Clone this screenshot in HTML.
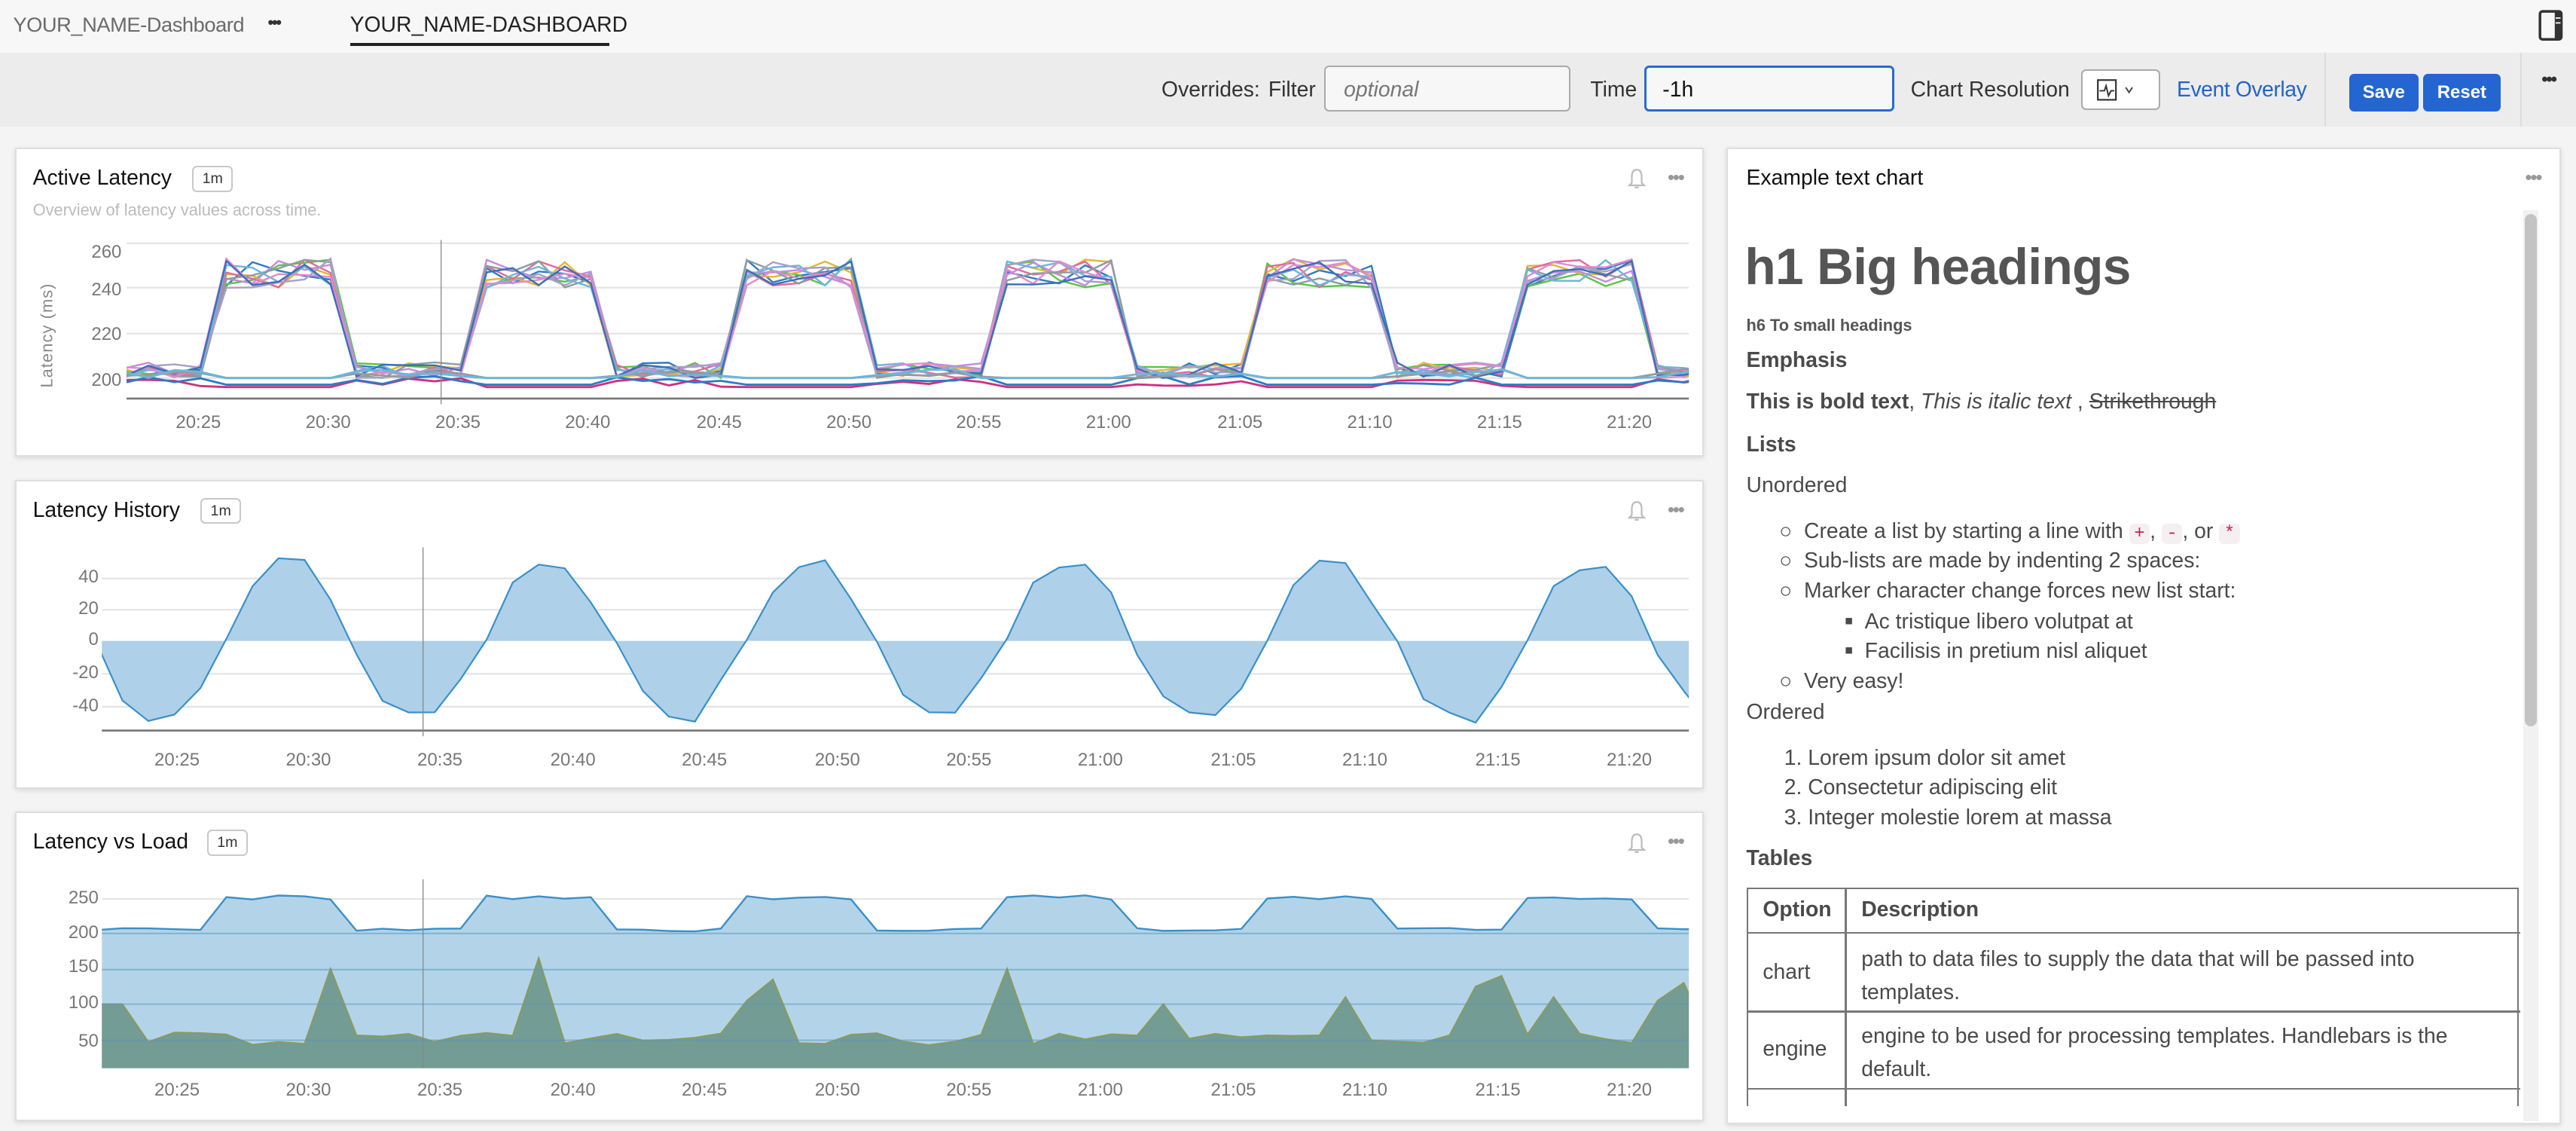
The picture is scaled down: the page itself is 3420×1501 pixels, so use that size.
<!DOCTYPE html>
<html><head><meta charset="utf-8">
<style>
html,body{margin:0;padding:0;width:3420px;height:1500px;overflow:hidden;background:#f4f4f4;}
#root{position:absolute;left:0;top:0;width:1568px;height:688px;zoom:2.18112;font-family:"Liberation Sans",sans-serif;color:#333;}
.a{position:absolute;white-space:nowrap;}
.panel{position:absolute;background:#fff;border:1px solid #dedede;box-shadow:0 1px 3px rgba(0,0,0,.12);box-sizing:border-box;}
.badge{position:absolute;border:1px solid #c8c8c8;border-radius:3px;font-size:9px;line-height:14px;text-align:center;color:#333;background:#fff;}
.ttl{font-size:13px;color:#111;}
.lab{font-size:11px;color:#777;}
.yl{font-size:11px;color:#777;text-align:right;width:30px;}
.rt{font-size:13px;color:#4a4a4a;}
.code{background:#f6eff1;color:#c0264f;border-radius:3px;padding:0 3px;font-family:"Liberation Mono",monospace;font-size:11px;}
.dots{font-size:12px;color:#999;letter-spacing:-1px;}
</style></head><body>
<div id="root">
<!-- top bar -->
<div class="a" style="left:0;top:0;width:1568px;height:32px;background:#f7f7f7;"></div>
<div class="a" style="left:8px;top:8px;font-size:12.5px;color:#6a6a6a;letter-spacing:-.2px;">YOUR_NAME-Dashboard</div>
<div class="a" style="left:163px;top:8px;font-size:10px;color:#333;font-weight:bold;letter-spacing:-1px;">•••</div>
<div class="a" style="left:213px;top:8px;font-size:13px;color:#222;">YOUR_NAME-DASHBOARD</div>
<div class="a" style="left:213px;top:26px;width:158px;height:2px;background:#222;"></div>
<svg class="a" style="left:1545px;top:6px" width="16" height="20" viewBox="0 0 16 20"><rect x="1" y="1" width="13" height="17" rx="1.5" fill="none" stroke="#333" stroke-width="1.6"/><rect x="10" y="1" width="4" height="17" fill="#333"/><line x1="10.5" y1="5" x2="13.5" y2="5" stroke="#fff" stroke-width=".8"/><line x1="10.5" y1="8" x2="13.5" y2="8" stroke="#fff" stroke-width=".8"/></svg>
<!-- toolbar -->
<div class="a" style="left:0;top:32px;width:1568px;height:45px;background:#ececec;"></div>
<div class="a" style="left:707px;top:47px;font-size:13px;color:#333;">Overrides:</div>
<div class="a" style="left:772px;top:47px;font-size:13px;color:#333;">Filter</div>
<div class="a" style="left:806px;top:40px;width:150px;height:28px;border:1px solid #aaa;border-radius:3px;background:#f7f7f7;box-sizing:border-box;"></div>
<div class="a" style="left:818px;top:47px;font-size:13px;color:#777;font-style:italic;">optional</div>
<div class="a" style="left:968px;top:47px;font-size:13px;color:#333;">Time</div>
<div class="a" style="left:1001px;top:40px;width:152px;height:28px;border:1.5px solid #2a6ad0;border-radius:3px;background:#f7f7f7;box-sizing:border-box;"></div>
<div class="a" style="left:1012px;top:47px;font-size:13px;color:#111;">-1h</div>
<div class="a" style="left:1163px;top:47px;font-size:13px;color:#333;">Chart Resolution</div>
<div class="a" style="left:1267px;top:42px;width:48px;height:25px;border:1px solid #aaa;border-radius:3px;background:#fff;box-sizing:border-box;"></div>
<svg class="a" style="left:1276px;top:47px" width="32" height="16" viewBox="0 0 32 16"><rect x="1" y="1.5" width="11" height="12" fill="none" stroke="#333" stroke-width="1"/><polyline points="2,8 5,8 6,5 7.5,11 9,8 11,8" fill="none" stroke="#333" stroke-width=".9"/><polyline points="18,6 20,9 22,6" fill="none" stroke="#444" stroke-width=".9"/></svg>
<div class="a" style="left:1325px;top:47px;font-size:13px;color:#2563c9;letter-spacing:-.2px;">Event Overlay</div>
<div class="a" style="left:1415px;top:32px;width:1px;height:45px;background:#ddd;"></div>
<div class="a" style="left:1430px;top:45px;width:42px;height:23px;background:#2466d1;border-radius:3px;color:#fff;font-size:11px;line-height:23px;text-align:center;font-weight:bold;">Save</div>
<div class="a" style="left:1475px;top:45px;width:47px;height:23px;background:#2466d1;border-radius:3px;color:#fff;font-size:11px;line-height:23px;text-align:center;font-weight:bold;">Reset</div>
<div class="a" style="left:1534px;top:32px;width:1px;height:45px;background:#ddd;"></div>
<div class="a" style="left:1547px;top:42px;font-size:11px;color:#333;letter-spacing:-1px;font-weight:bold;">•••</div>

<!-- panels -->
<div class="panel" style="left:9px;top:90px;width:1028px;height:188px;"></div>
<div class="panel" style="left:9px;top:292px;width:1028px;height:188px;"></div>
<div class="panel" style="left:9px;top:494px;width:1028px;height:188px;"></div>
<div class="panel" style="left:1051px;top:90px;width:508px;height:594px;"></div>

<!-- panel 1 -->
<div class="a ttl" style="left:20px;top:101px;">Active Latency</div>
<div class="badge" style="left:117px;top:101px;width:23px;">1m</div>
<div class="a" style="left:20px;top:122px;font-size:10px;color:#bbb;">Overview of latency values across time.</div>
<div class="a yl" style="left:44px;top:147px;">260</div>
<div class="a yl" style="left:44px;top:170px;">240</div>
<div class="a yl" style="left:44px;top:197px;">220</div>
<div class="a yl" style="left:44px;top:225px;">200</div>
<div class="a" style="left:-3px;top:198px;font-size:10px;color:#888;transform:rotate(-90deg);letter-spacing:.5px;">Latency (ms)</div>
<!-- panel 2 -->
<div class="a ttl" style="left:20px;top:303px;">Latency History</div>
<div class="badge" style="left:122px;top:303px;width:23px;">1m</div>
<div class="a yl" style="left:30px;top:345px;">40</div>
<div class="a yl" style="left:30px;top:364px;">20</div>
<div class="a yl" style="left:30px;top:383px;">0</div>
<div class="a yl" style="left:30px;top:403px;">-20</div>
<div class="a yl" style="left:30px;top:423px;">-40</div>
<!-- panel 3 -->
<div class="a ttl" style="left:20px;top:505px;">Latency vs Load</div>
<div class="badge" style="left:126px;top:505px;width:23px;">1m</div>
<div class="a yl" style="left:30px;top:540px;">250</div>
<div class="a yl" style="left:30px;top:561px;">200</div>
<div class="a yl" style="left:30px;top:582px;">150</div>
<div class="a yl" style="left:30px;top:604px;">100</div>
<div class="a yl" style="left:30px;top:627px;">50</div>

<!-- bells & dots -->
<svg class="a" style="left:991px;top:102px" width="11" height="14" viewBox="0 0 11 14"><path d="M5.5 1.5 C3 1.5 2.5 4 2.5 6 L2.5 9.5 L1 11 L10 11 L8.5 9.5 L8.5 6 C8.5 4 8 1.5 5.5 1.5Z" fill="none" stroke="#bbb" stroke-width="1"/><path d="M4.3 12.3 h2.4" stroke="#bbb"/></svg>
<div class="a dots" style="left:1015px;top:101px;">•••</div>
<svg class="a" style="left:991px;top:304px" width="11" height="14" viewBox="0 0 11 14"><path d="M5.5 1.5 C3 1.5 2.5 4 2.5 6 L2.5 9.5 L1 11 L10 11 L8.5 9.5 L8.5 6 C8.5 4 8 1.5 5.5 1.5Z" fill="none" stroke="#bbb" stroke-width="1"/><path d="M4.3 12.3 h2.4" stroke="#bbb"/></svg>
<div class="a dots" style="left:1015px;top:303px;">•••</div>
<svg class="a" style="left:991px;top:506px" width="11" height="14" viewBox="0 0 11 14"><path d="M5.5 1.5 C3 1.5 2.5 4 2.5 6 L2.5 9.5 L1 11 L10 11 L8.5 9.5 L8.5 6 C8.5 4 8 1.5 5.5 1.5Z" fill="none" stroke="#bbb" stroke-width="1"/><path d="M4.3 12.3 h2.4" stroke="#bbb"/></svg>
<div class="a dots" style="left:1015px;top:505px;">•••</div>

<!-- x labels -->
<div class="a lab" style="left:107px;top:251px">20:25</div><div class="a lab" style="left:186px;top:251px">20:30</div><div class="a lab" style="left:265px;top:251px">20:35</div><div class="a lab" style="left:344px;top:251px">20:40</div><div class="a lab" style="left:424px;top:251px">20:45</div><div class="a lab" style="left:503px;top:251px">20:50</div><div class="a lab" style="left:582px;top:251px">20:55</div><div class="a lab" style="left:661px;top:251px">21:00</div><div class="a lab" style="left:741px;top:251px">21:05</div><div class="a lab" style="left:820px;top:251px">21:10</div><div class="a lab" style="left:899px;top:251px">21:15</div><div class="a lab" style="left:978px;top:251px">21:20</div>
<div class="a lab" style="left:94px;top:456px">20:25</div><div class="a lab" style="left:174px;top:456px">20:30</div><div class="a lab" style="left:254px;top:456px">20:35</div><div class="a lab" style="left:335px;top:456px">20:40</div><div class="a lab" style="left:415px;top:456px">20:45</div><div class="a lab" style="left:496px;top:456px">20:50</div><div class="a lab" style="left:576px;top:456px">20:55</div><div class="a lab" style="left:656px;top:456px">21:00</div><div class="a lab" style="left:737px;top:456px">21:05</div><div class="a lab" style="left:817px;top:456px">21:10</div><div class="a lab" style="left:898px;top:456px">21:15</div><div class="a lab" style="left:978px;top:456px">21:20</div>
<div class="a lab" style="left:94px;top:657px">20:25</div><div class="a lab" style="left:174px;top:657px">20:30</div><div class="a lab" style="left:254px;top:657px">20:35</div><div class="a lab" style="left:335px;top:657px">20:40</div><div class="a lab" style="left:415px;top:657px">20:45</div><div class="a lab" style="left:496px;top:657px">20:50</div><div class="a lab" style="left:576px;top:657px">20:55</div><div class="a lab" style="left:656px;top:657px">21:00</div><div class="a lab" style="left:737px;top:657px">21:05</div><div class="a lab" style="left:817px;top:657px">21:10</div><div class="a lab" style="left:898px;top:657px">21:15</div><div class="a lab" style="left:978px;top:657px">21:20</div>

<svg id="ch" class="a" style="left:0;top:0" width="1568" height="688" viewBox="0 0 1568 688">
<defs>
<clipPath id="c1"><rect x="77" y="130" width="951" height="120"/></clipPath>
<clipPath id="c2"><rect x="62" y="330" width="966" height="120"/></clipPath>
<clipPath id="c3"><rect x="62" y="530" width="966" height="120"/></clipPath>
</defs>
<g stroke="#e4e4e4" stroke-width="1">
<line x1="77" y1="148" x2="1028" y2="148"/><line x1="77" y1="175" x2="1028" y2="175"/><line x1="77" y1="203" x2="1028" y2="203"/><line x1="77" y1="230" x2="1028" y2="230"/>
<line x1="62" y1="352" x2="1028" y2="352"/><line x1="62" y1="371" x2="1028" y2="371"/><line x1="62" y1="410" x2="1028" y2="410"/><line x1="62" y1="430" x2="1028" y2="430"/>
<line x1="62" y1="547" x2="1028" y2="547"/>
</g>
<g id="g1" clip-path="url(#c1)"></g>
<g id="g2" clip-path="url(#c2)"></g>
<g id="g3" clip-path="url(#c3)"></g>
<g stroke="rgba(90,150,190,.5)" stroke-width="1">
<line x1="62" y1="568" x2="1028" y2="568"/><line x1="62" y1="590" x2="1028" y2="590"/><line x1="62" y1="611" x2="1028" y2="611"/><line x1="62" y1="633" x2="1028" y2="633"/>
</g>
<line x1="77" y1="242.5" x2="1028" y2="242.5" stroke="#777" stroke-width="1.2"/>
<line x1="62" y1="444.5" x2="1028" y2="444.5" stroke="#777" stroke-width="1.2"/>
<line x1="268.5" y1="146" x2="268.5" y2="246" stroke="#888" stroke-width=".6"/>
<line x1="257.5" y1="333" x2="257.5" y2="448" stroke="#888" stroke-width=".6"/>
<line x1="257.5" y1="535" x2="257.5" y2="650" stroke="#888" stroke-width=".6"/>
</svg>

<!-- right panel -->
<div class="a ttl" style="left:1063px;top:101px;">Example text chart</div>
<div class="a dots" style="left:1537px;top:101px;">•••</div>
<div class="a" style="left:1536px;top:128px;width:9px;height:554px;background:#f1f1f1;"></div>
<div class="a" style="left:1537px;top:130px;width:7px;height:312px;background:#c3c3c3;border-radius:4px;"></div>
<div class="a" style="left:1062px;top:145px;font-size:31px;font-weight:bold;color:#555;letter-spacing:-.3px;">h1 Big headings</div>
<div class="a" style="left:1063px;top:192px;font-size:10px;font-weight:bold;color:#555;">h6 To small headings</div>
<div class="a rt" style="left:1063px;top:212px;font-weight:bold;">Emphasis</div>
<div class="a rt" style="left:1063px;top:237px;"><b>This is bold text</b>, <i>This is italic text</i> , <s>Strikethrough</s></div>
<div class="a rt" style="left:1063px;top:263px;font-weight:bold;">Lists</div>
<div class="a rt" style="left:1063px;top:288px;">Unordered</div>
<div class="a rt" style="left:1083px;top:316px;">○&nbsp; Create a list by starting a line with <span class="code">+</span>, <span class="code">-</span>, or <span class="code">*</span></div>
<div class="a rt" style="left:1083px;top:334px;">○&nbsp; Sub-lists are made by indenting 2 spaces:</div>
<div class="a rt" style="left:1083px;top:352px;">○&nbsp; Marker character change forces new list start:</div>
<div class="a rt" style="left:1123px;top:371px;"><span style="font-size:8px;vertical-align:2px">■</span>&nbsp;&nbsp;Ac tristique libero volutpat at</div>
<div class="a rt" style="left:1123px;top:389px;"><span style="font-size:8px;vertical-align:2px">■</span>&nbsp;&nbsp;Facilisis in pretium nisl aliquet</div>
<div class="a rt" style="left:1083px;top:407px;">○&nbsp; Very easy!</div>
<div class="a rt" style="left:1063px;top:426px;">Ordered</div>
<div class="a rt" style="left:1086px;top:454px;">1. Lorem ipsum dolor sit amet</div>
<div class="a rt" style="left:1086px;top:472px;">2. Consectetur adipiscing elit</div>
<div class="a rt" style="left:1086px;top:490px;">3. Integer molestie lorem at massa</div>
<div class="a rt" style="left:1063px;top:515px;font-weight:bold;">Tables</div>
<div class="a" style="left:1063px;top:540px;width:471px;height:133px;overflow:hidden;">
<div class="a" style="left:0;top:0;width:470px;height:140px;border:1px solid #777;border-bottom:none;box-sizing:border-box;"></div>
<div class="a" style="left:60px;top:0;width:1px;height:140px;background:#777;"></div>
<div class="a" style="left:0;top:27px;width:471px;height:1px;background:#777;"></div>
<div class="a" style="left:0;top:75px;width:471px;height:1px;background:#777;"></div>
<div class="a" style="left:0;top:122px;width:471px;height:1px;background:#777;"></div>
<div class="a rt" style="left:10px;top:6px;font-weight:bold;">Option</div>
<div class="a rt" style="left:70px;top:6px;font-weight:bold;">Description</div>
<div class="a rt" style="left:10px;top:44px;">chart</div>
<div class="a rt" style="left:70px;top:34px;line-height:20px;">path to data files to supply the data that will be passed into<br>templates.</div>
<div class="a rt" style="left:10px;top:91px;">engine</div>
<div class="a rt" style="left:70px;top:81px;line-height:20px;">engine to be used for processing templates. Handlebars is the<br>default.</div>
</div>
</div>
<script>
(function(){
var s=7;function r(){s=(s*9301+49297)%233280;return s/233280;}
var NS="http://www.w3.org/2000/svg";
function X(t){return 122+15.84*t;}
function hi(t){var m=((t-1)%10+10)%10;return m<=4;}
function el(g,tag,at){var e=document.createElementNS(NS,tag);for(var k in at)e.setAttribute(k,at[k]);document.getElementById(g).appendChild(e);}
var cols=["#2e7bc4","#5ac34a","#e6b533","#e06a9a","#c38be0","#8c9d9d","#6bb6dc","#a8a0c8","#e08ad0","#3d6fb8"];
function Y1(v){return 230-(v-200)*1.37;}
for(var i=0;i<cols.length;i++){var p=[];for(var t=-5;t<=59;t++){var v=hi(t)?240+r()*13:200+r()*7;p.push(X(t).toFixed(1)+","+Y1(v).toFixed(1));}
el("g1","polyline",{points:p.join(" "),fill:"none",stroke:cols[i],"stroke-width":1.1});}
var lows=[["#d0307f",196],["#2e7bc4",197],["#999",200],["#6bb6dc",200]];
for(var j=0;j<lows.length;j++){var p=[];for(var t=-5;t<=59;t++){var v=lows[j][1]+(hi(t)?0:(r()*4));p.push(X(t).toFixed(1)+","+Y1(v).toFixed(1));}
el("g1","polyline",{points:p.join(" "),fill:"none",stroke:lows[j][0],"stroke-width":1.3});}
function Y2(v){return 390-v*0.975;}
var p=[X(-5)+",390"];for(var t=-5;t<=59;t++){var v=45*Math.sin(2*Math.PI*(t-0.85)/10);v=Math.max(-48,Math.min(48,v*1.15))+(r()-.5)*8;if(Math.abs(v)<8)v=v*0.2;p.push(X(t).toFixed(1)+","+Y2(v).toFixed(1));}
var line=p.slice(1).join(" ");
el("g2","polygon",{points:p.join(" ")+" "+X(59)+",390",fill:"#aed0e8"});
el("g2","polyline",{points:line,fill:"none",stroke:"#3a8fc8","stroke-width":1});
function Y3(v){return 568-(v-200)*0.43;}
var up=[],lo=[];var spikes={"5":150,"13":165,"21":105,"22":135,"31":150,"37":100,"44":110,"49":125,"50":140,"52":110,"56":105,"57":130};
for(var t=-5;t<=59;t++){var v=hi(t)?248+r()*6:203+r()*5;up.push(X(t).toFixed(1)+","+Y3(v).toFixed(1));
var w=spikes[""+t]||(42+r()*18);if(t==-4||t==-3)w=100;lo.push(X(t).toFixed(1)+","+Y3(w).toFixed(1));}
el("g3","polygon",{points:X(-5)+",650 "+up.join(" ")+" "+X(59)+",650",fill:"#b3d4e8"});
el("g3","polyline",{points:up.join(" "),fill:"none",stroke:"#3a8fc8","stroke-width":1.1});
el("g3","polygon",{points:X(-5)+",650 "+lo.join(" ")+" "+X(59)+",650",fill:"#739c94"});
el("g3","polyline",{points:lo.join(" "),fill:"none",stroke:"#8a9a60","stroke-width":1});
})();
</script>
</body></html>
